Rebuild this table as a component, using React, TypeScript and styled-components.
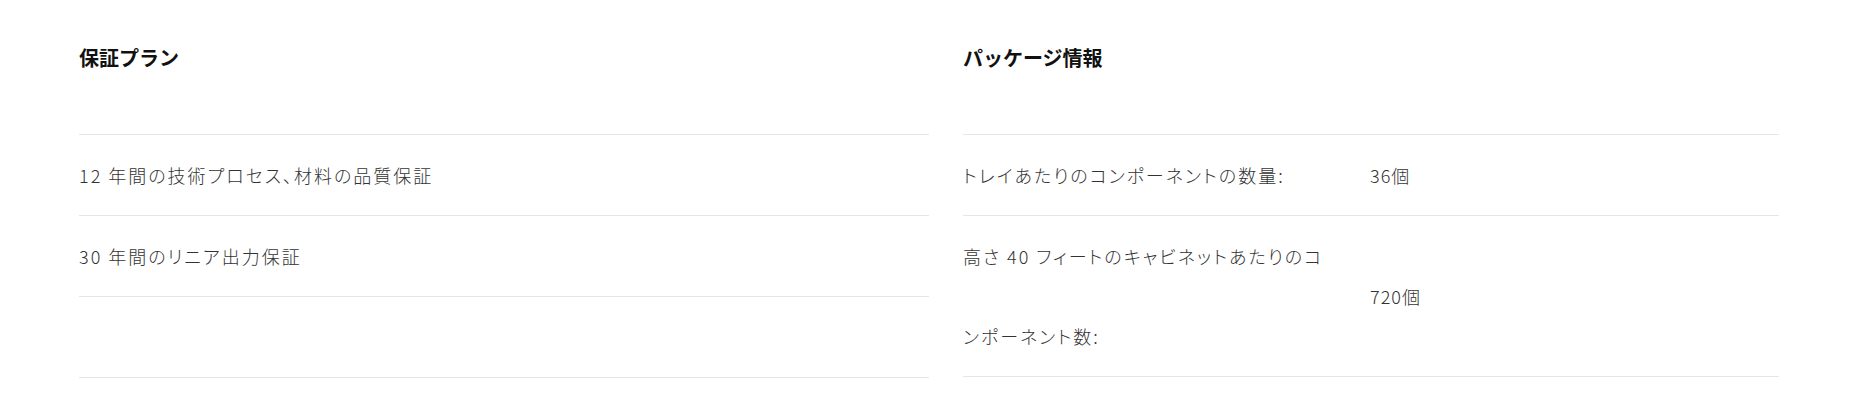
import styled, { createGlobalStyle } from "styled-components";

const GlobalStyle = createGlobalStyle`
  body {
    margin: 0;
    background: #fff;
    font-family: "Noto Sans CJK JP", "Noto Sans", sans-serif;
  }
`;

const Page = styled.div`
  display: grid;
  grid-template-columns: 850px 816px;
  column-gap: 34px;
  padding-left: 79px;
  align-items: start;
`;

const Column = styled.section`
  display: flex;
  flex-direction: column;
`;

const Title = styled.h3`
  margin: 0;
  padding: 44px 0 63px;
  font-size: 20px;
  line-height: 27px;
  font-weight: 700;
  color: #111;
  border-bottom: 1px solid #e6e6e6;
`;

const Row = styled.div<{ $label?: boolean }>`
  display: grid;
  grid-template-columns: ${(p) => (p.$label ? "407px 1fr" : "1fr")};
  min-height: 80px;
  border-bottom: 1px solid #e6e6e6;
  font-size: 18px;
  font-weight: 300;
  line-height: 80px;
  letter-spacing: 2px;
  font-feature-settings: "palt";
  color: #333;
`;

const Label = styled.div`
  padding-right: 45px;
`;

const Value = styled.div`
  align-self: center;
  letter-spacing: 1px;
`;

const warranty = ["12 年間の技術プロセス、材料の品質保証", "30 年間のリニア出力保証", ""];

const packageInfo = [
  { label: "トレイあたりのコンポーネントの数量:", value: "36個" },
  { label: "高さ 40 フィートのキャビネットあたりのコンポーネント数:", value: "720個" },
];

const App = () => {
  return (
    <>
      <GlobalStyle />
      <Page>
        <Column>
          <Title>保証プラン</Title>
          {warranty.map((text, i) => (
            <Row key={i}>{text}</Row>
          ))}
        </Column>
        <Column>
          <Title>パッケージ情報</Title>
          {packageInfo.map((item) => (
            <Row $label key={item.label}>
              <Label>{item.label}</Label>
              <Value>{item.value}</Value>
            </Row>
          ))}
        </Column>
      </Page>
    </>
  );
};

export default App;
